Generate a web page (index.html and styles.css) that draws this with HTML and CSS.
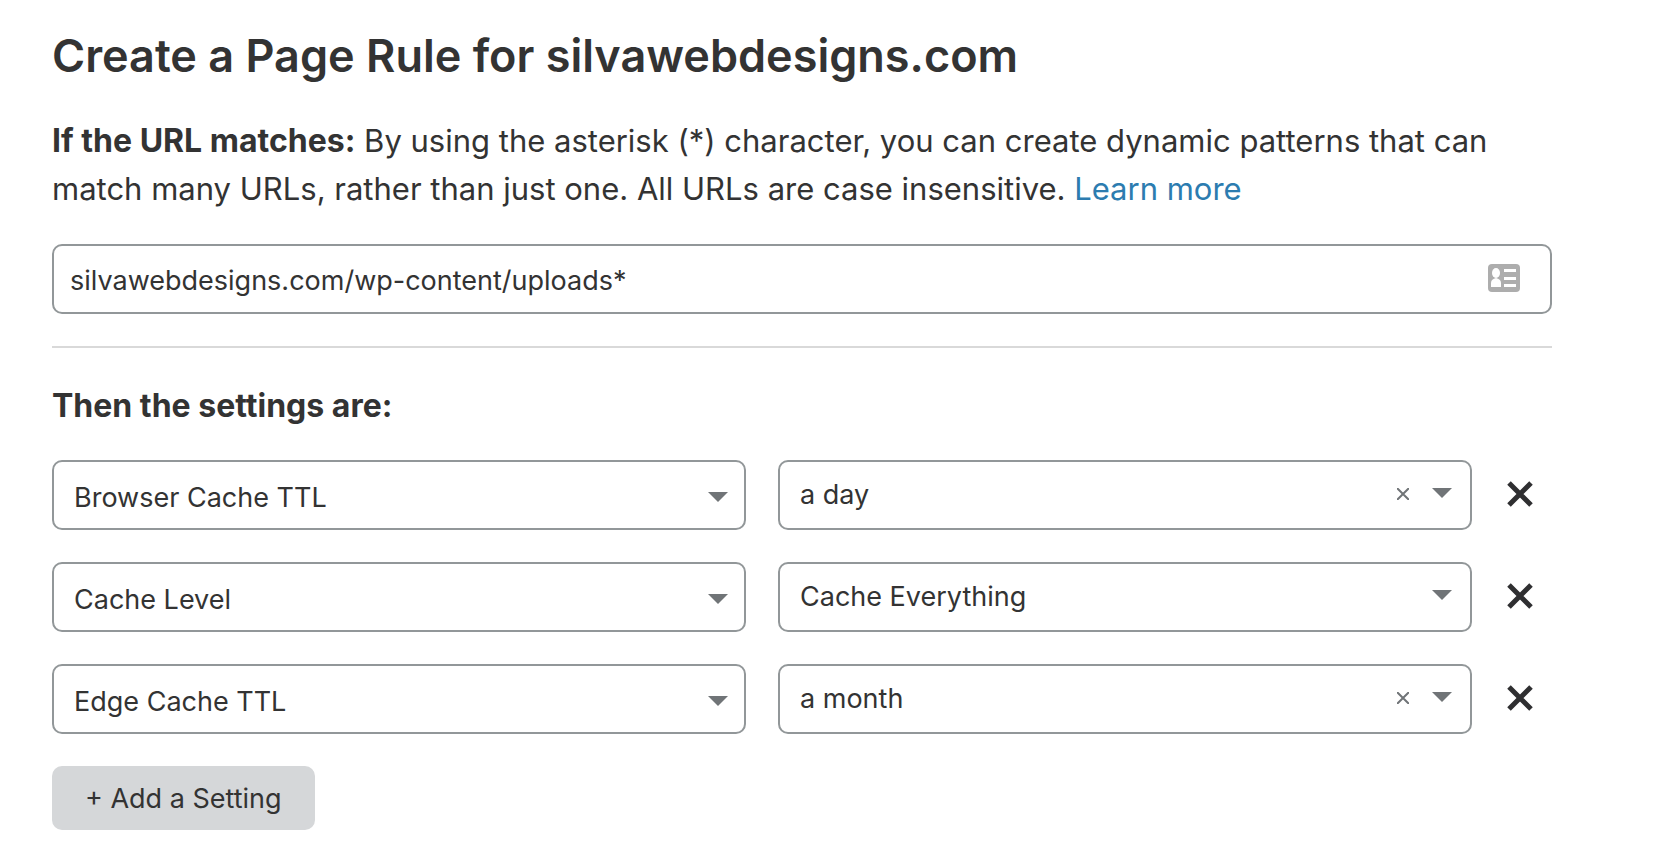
FILE: index.html
```html
<!DOCTYPE html>
<html lang="en">
<head>
<meta charset="utf-8">
<title>Create a Page Rule</title>
<link rel="stylesheet" href="styles.css">
</head>
<body>
<main class="page">
  <form class="rule">
    <h1 class="title">Create a Page Rule for silvawebdesigns.com</h1>
    <p class="intro"><label class="lead" for="url">If the URL matches:</label> By using the asterisk (*) character, you can create dynamic patterns that can match many URLs, rather than just one. All URLs are case insensitive. <a class="link" href="#">Learn more</a></p>
    <div class="url">
      <input class="field url-input" id="url" type="text" value="silvawebdesigns.com/wp-content/uploads*">
      <svg class="card-icon" viewBox="0 0 32 28" aria-hidden="true">
        <rect width="32" height="28" rx="4" fill="#adadad"/>
        <ellipse cx="8" cy="9" rx="4" ry="5" fill="#fff"/>
        <path d="M3 23v-4c0-3 2-4 5-5 3 1 5 2 5 5v4z" fill="#fff"/>
        <path d="M16 5h12v3H16zM16 13h12v3H16zM16 20h12v3H16z" fill="#fff"/>
      </svg>
    </div>
    <hr class="rule-line">
    <h2 class="subtitle">Then the settings are:</h2>
    <div class="settings">
      <div class="setting">
        <div class="picker picker-name">
          <select class="field" aria-label="Setting 1"><option>Browser Cache TTL</option></select>
          <svg class="caret" viewBox="0 0 20 10" aria-hidden="true"><path d="M0 0h20L10 10z"/></svg>
        </div>
        <div class="picker picker-value">
          <select class="field" aria-label="Value 1"><option>a day</option></select>
          <button class="clear" type="button" aria-label="Clear value"><svg viewBox="0 0 12 12"><path d="M0 0l12 12M12 0L0 12"/></svg></button>
          <svg class="caret" viewBox="0 0 20 10" aria-hidden="true"><path d="M0 0h20L10 10z"/></svg>
        </div>
        <button class="remove" type="button" aria-label="Remove setting"><svg viewBox="0 0 26 26"><path d="M2 2l22 22M24 2L2 24"/></svg></button>
      </div>
      <div class="setting">
        <div class="picker picker-name">
          <select class="field" aria-label="Setting 2"><option>Cache Level</option></select>
          <svg class="caret" viewBox="0 0 20 10" aria-hidden="true"><path d="M0 0h20L10 10z"/></svg>
        </div>
        <div class="picker picker-value">
          <select class="field" aria-label="Value 2"><option>Cache Everything</option></select>
          <svg class="caret" viewBox="0 0 20 10" aria-hidden="true"><path d="M0 0h20L10 10z"/></svg>
        </div>
        <button class="remove" type="button" aria-label="Remove setting"><svg viewBox="0 0 26 26"><path d="M2 2l22 22M24 2L2 24"/></svg></button>
      </div>
      <div class="setting">
        <div class="picker picker-name">
          <select class="field" aria-label="Setting 3"><option>Edge Cache TTL</option></select>
          <svg class="caret" viewBox="0 0 20 10" aria-hidden="true"><path d="M0 0h20L10 10z"/></svg>
        </div>
        <div class="picker picker-value">
          <select class="field" aria-label="Value 3"><option>a month</option></select>
          <button class="clear" type="button" aria-label="Clear value"><svg viewBox="0 0 12 12"><path d="M0 0l12 12M12 0L0 12"/></svg></button>
          <svg class="caret" viewBox="0 0 20 10" aria-hidden="true"><path d="M0 0h20L10 10z"/></svg>
        </div>
        <button class="remove" type="button" aria-label="Remove setting"><svg viewBox="0 0 26 26"><path d="M2 2l22 22M24 2L2 24"/></svg></button>
      </div>
    </div>
    <button class="add" type="button">+ Add a Setting</button>
  </form>
</main>
</body>
</html>
```
FILE: styles.css
```css
* {
  box-sizing: border-box;
}

body {
  margin: 0;
  background: #fff;
  color: #333;
  font-family: Inter, "Liberation Sans", sans-serif;
}

.page {
  padding: 24px 106px 24px 52px;
}

.rule {
  display: flex;
  flex-direction: column;
}

.title {
  margin: 0;
  font-size: 45px;
  font-weight: 600;
  line-height: 64px;
}

.intro {
  margin: 29px 0 0;
  font-size: 31px;
  line-height: 48px;
}

.lead {
  font-size: 32px;
  font-weight: 700;
  line-height: 1;
}

.link {
  color: #2c7cb0;
  text-decoration: none;
}

.url {
  position: relative;
  margin-top: 31px;
}

.field {
  display: block;
  width: 100%;
  height: 70px;
  margin: 0;
  border: 2px solid #929799;
  border-radius: 10px;
  background: #fff;
  color: #333;
  font-family: inherit;
  font-size: 27px;
  appearance: none;
}

.url-input {
  padding: 2px 80px 0 16px;
}

.card-icon {
  position: absolute;
  top: 20px;
  right: 32px;
  width: 32px;
  height: 28px;
}

.rule-line {
  width: 100%;
  height: 2px;
  margin: 32px 0 0;
  border: 0;
  background: #d9d9d9;
}

.subtitle {
  margin: 34px 0 0;
  font-size: 32px;
  font-weight: 700;
  line-height: 48px;
}

.settings {
  display: grid;
  gap: 32px;
  margin-top: 30px;
}

.setting {
  display: grid;
  grid-template-columns: 1fr 1fr 48px;
  align-items: center;
  column-gap: 32px;
}

.picker {
  position: relative;
}

.picker .field {
  padding: 0 100px 0 20px;
}

.picker-name .field {
  padding-top: 4px;
}

.picker-value .field {
  padding-bottom: 2px;
}

.caret {
  position: absolute;
  top: 32px;
  right: 18px;
  width: 20px;
  height: 10px;
  fill: #707477;
  pointer-events: none;
}

.picker-value .caret {
  top: 28px;
  right: 20px;
}

.clear,
.remove {
  padding: 0;
  border: 0;
  background: none;
  cursor: pointer;
}

.clear {
  position: absolute;
  top: 28px;
  right: 63px;
  width: 12px;
  height: 12px;
}

.clear svg,
.remove svg {
  display: block;
  width: 100%;
  height: 100%;
  fill: none;
}

.clear svg {
  stroke: #707477;
  stroke-width: 2;
}

.remove {
  width: 26px;
  height: 26px;
  margin: 0 0 2px 3px;
}

.remove svg {
  stroke: #2f2f31;
  stroke-width: 5;
}

.add {
  align-self: flex-start;
  height: 64px;
  margin-top: 32px;
  padding: 0 33px;
  border: 0;
  border-radius: 10px;
  background: #d5d7d9;
  color: #333;
  font-family: inherit;
  font-size: 27px;
  cursor: pointer;
}
```
